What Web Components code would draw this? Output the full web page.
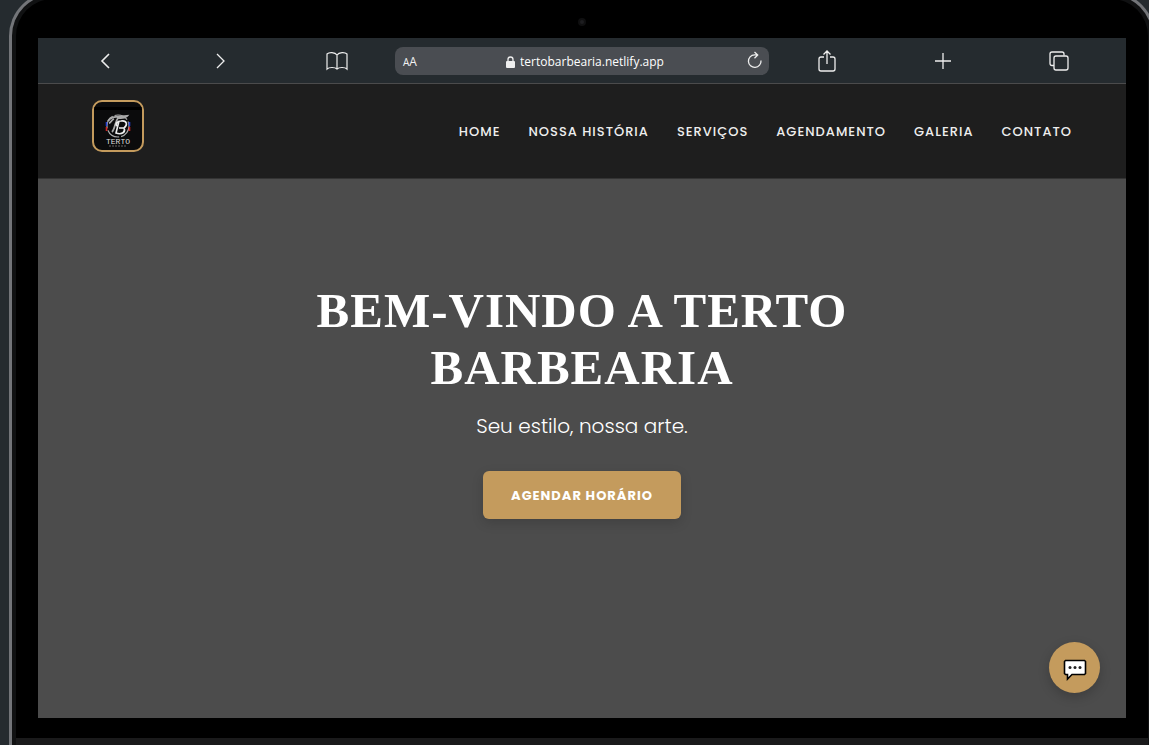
<!DOCTYPE html>
<html lang="pt-BR">
<head>
<meta charset="utf-8">
<meta name="viewport" content="width=device-width, initial-scale=1">
<title>Terto Barbearia</title>
<style>
  html { height: 100%; background: #252b2f; }
  body { margin: 0; height: 100%; overflow: hidden; font-family: Poppins, Inter, sans-serif; color: #fff; }
</style>
</head>
<body>
<device-frame>
  <browser-bar></browser-bar>
  <site-header></site-header>
  <site-hero>
    <span slot="title">Bem-vindo a Terto Barbearia</span>
    <span slot="tagline">Seu estilo, nossa arte.</span>
    <span slot="action">Agendar Horário</span>
  </site-hero>
  <chat-button></chat-button>
</device-frame>

<script>
const define = (name, html) => {
  const template = document.createElement('template');
  template.innerHTML = html;
  customElements.define(name, class extends HTMLElement {
    constructor() {
      super();
      this.attachShadow({ mode: 'open' }).append(template.content.cloneNode(true));
    }
  });
};

define('device-frame', `
<style>
  :host { display: block; height: 100%; }
  .case { box-sizing: border-box; height: calc(100% + 8px); margin: -8px -6px 0 9px; background: #000;
    border: 3px solid #737579; border-bottom: 0; border-radius: 44px 44px 0 0;
    box-shadow: inset 0 0 0 4px #101112; display: flex; flex-direction: column; }
  .camera { height: 43px; display: grid; place-items: center; flex: none; }
  .camera i { width: 4px; height: 4px; margin-top: 10px; border-radius: 50%; background: #1d1d20; border: 2px solid #0f0f10; }
  .screen { position: relative; flex: 1; min-height: 0; margin: 0 26px; display: flex; flex-direction: column; overflow: hidden; background: #4c4c4c; }
  .chin { flex: none; height: 7px; margin: 20px 4px 0; background: #1a1a1b; }
</style>
<div class="case">
  <div class="camera"><i></i></div>
  <div class="screen"><slot></slot></div>
  <div class="chin"></div>
</div>`);

define('browser-bar', `
<style>
  :host { display: grid; grid-template-columns: 1fr 1fr 1fr 374px 1fr 1fr 1fr; align-items: center; height: 45px; flex: none;
    padding: 0 9px; background: #252b2f; border-bottom: 1px solid #4b4b4c; font-family: "Open Sans", "Noto Sans", sans-serif; color: #f2f2f2; }
  button { all: unset; display: grid; place-items: center; color: inherit; }
  svg { display: block; fill: none; stroke: #eee; stroke-width: 1.3; }
  form { display: flex; align-items: center; height: 28px; margin: 0; padding: 0 6px 0 8px; box-sizing: border-box; border-radius: 8px; background: #4a4d52; font-size: 12px; }
  .size { font-size: 12px; line-height: 16px; width: 20px; padding-top: 2px; place-items: center start; }
  .size small { font-size: 10px; }
  label { flex: 1; display: flex; align-items: center; justify-content: center; gap: 5px; padding-top: 2px; }
  input { all: unset; field-sizing: content; font-size: 12px; line-height: 16px; color: #fff; }
</style>
<button aria-label="Voltar"><svg width="22" height="22"><path d="M15 4 8 11l7 7" stroke-width="1.6"/></svg></button>
<button aria-label="Avançar"><svg width="22" height="22"><path d="m7 4 7 7-7 7"/></svg></button>
<button aria-label="Favoritos"><svg width="24" height="22"><path d="M12 5C10 2 4 2 2 4v15c2-2 8-2 10 0 2-2 8-2 10 0V4c-2-2-8-2-10 1v14" stroke-width="1.2"/></svg></button>
<form>
  <button class="size" type="button" aria-label="Tamanho do texto"><span><small>A</small>A</span></button>
  <label><svg width="9" height="12" aria-hidden="true"><path d="M2 6V3.500a2.500 2.500 0 0 1 5 0V6"/><rect y="5" width="9" height="7" rx="1" fill="#eee" stroke="none"/></svg><input aria-label="Endereço" value="tertobarbearia.netlify.app" readonly></label>
  <button type="button" aria-label="Recarregar"><svg width="16" height="20"><path d="M14 9.500a6.300 6.300 0 1 1-6.500-5.700h2.500M7.500 1l3.200 3-3.200 3.200"/></svg></button>
</form>
<button aria-label="Compartilhar"><svg width="20" height="24"><path d="M7 8H4q-2 0-2 2v10q0 2 2 2h12q2 0 2-2V10q0-2-2-2h-3M10 15V2M6.500 5.500 10 2l3.500 3.500"/></svg></button>
<button aria-label="Nova aba"><svg width="18" height="18"><path d="M9 1v16M1 9h16"/></svg></button>
<button aria-label="Abas"><svg width="22" height="22"><path d="M6 15.500H4q-2 0-2-2V4q0-2 2-2h10q2 0 2 2v1.500"/><rect x="6" y="6" width="14" height="14" rx="2"/></svg></button>`);

define('site-logo', `
<style>
  :host { display: block; width: 48px; height: 48px; border: 2px solid #c49b5d; border-radius: 10px; background: #0b0b0c; overflow: hidden; }
  a, svg { display: block; }
  text { font-family: "Liberation Mono", monospace; font-size: 8px; fill: #ddd; }
</style>
<a href="#home" aria-label="Terto Barbearia">
<svg width="48" height="48" viewBox="0 0 48 48">
  <path d="M0 5h48v3H0z" fill="#000"/>
  <circle cx="24" cy="24" r="11" fill="none" stroke="#aaa" stroke-width="1.200" stroke-dasharray="14 2"/>
  <path d="M12.500 25v4M35.500 25v4" stroke="#d32323" stroke-width="1.600"/>
  <path d="M12.500 20v4M35.500 20v4" stroke="#2742d0" stroke-width="1.600"/>
  <path d="M14 19c3-5 9-4 19-5-3 3-6 2-9 2-3 4-3 11-6 14M20 17c-3 1-3 4-5 4" fill="none" stroke="#aaa" stroke-width="1.800"/>
  <path d="M25 19 22 31c6 2 10-1 8-5 4-3 3-8-3-7-4 0-6 3-4 5m2 2h5" fill="none" stroke="#eee" stroke-width="1.600"/>
  <text x="24" y="42" text-anchor="middle">TERTO</text>
  <path d="M15 44h18" stroke="#666" stroke-dasharray="2 1"/>
</svg></a>`);

define('site-header', `
<style>
  :host { display: flex; justify-content: space-between; align-items: center; box-sizing: border-box; height: 95px; flex: none; padding: 0 54px; background: #1e1e1e; border-bottom: 1px solid #343434; }
  site-logo { margin-bottom: 10px; }
  nav { display: flex; gap: 28px; padding-top: 1px; }
  a { color: #eee; text-decoration: none; text-transform: uppercase; font-size: 13px; line-height: 20px; font-weight: 500; letter-spacing: 1px; white-space: nowrap; }
</style>
<site-logo></site-logo>
<nav>
  <a href="#home">Home</a><a href="#historia">Nossa História</a><a href="#servicos">Serviços</a><a href="#agendamento">Agendamento</a><a href="#galeria">Galeria</a><a href="#contato">Contato</a>
</nav>`);

define('site-hero', `
<style>
  :host { display: flex; flex-direction: column; align-items: center; flex: 1; padding: 103px 24px 0; text-align: center; background: #4c4c4c; }
  h1 { margin: 0; max-width: 640px; font: 700 49px/57px "Liberation Serif", serif; letter-spacing: 1px; text-transform: uppercase; }
  p { margin: 13px 0 28px; font-size: 20px; line-height: 34px; font-weight: 300; }
  button { border: 0; border-radius: 6px; padding: 15px 28px 13px; background: #c49b5d; color: #fff; font: inherit; font-size: 13px; line-height: 20px; font-weight: 700; letter-spacing: 1px; text-transform: uppercase; box-shadow: 0 4px 12px rgba(0,0,0,.15); }
</style>
<h1><slot name="title"></slot></h1>
<p><slot name="tagline"></slot></p>
<button><slot name="action"></slot></button>`);

define('chat-button', `
<style>
  :host { position: absolute; right: 26px; bottom: 25px; }
  button { display: grid; place-items: center; width: 51px; height: 51px; padding: 4px 0 0; border: 0; border-radius: 50%; background: #c49b5d; box-shadow: 0 4px 12px rgba(0,0,0,.2); }
</style>
<button aria-label="Abrir chat"><svg width="24" height="22" viewBox="0 0 24 22"><path d="M2.500 1.500h19l1 1v12l-1 1H9L4.500 20v-4.500h-2l-1-1v-12z" fill="#fff" stroke="#000" stroke-width="1.600"/><g fill="#222"><circle cx="7" cy="8.500" r="1.500"/><circle cx="12" cy="8.500" r="1.500"/><circle cx="17" cy="8.500" r="1.500"/></g></svg></button>`);
</script>
</body>
</html>
